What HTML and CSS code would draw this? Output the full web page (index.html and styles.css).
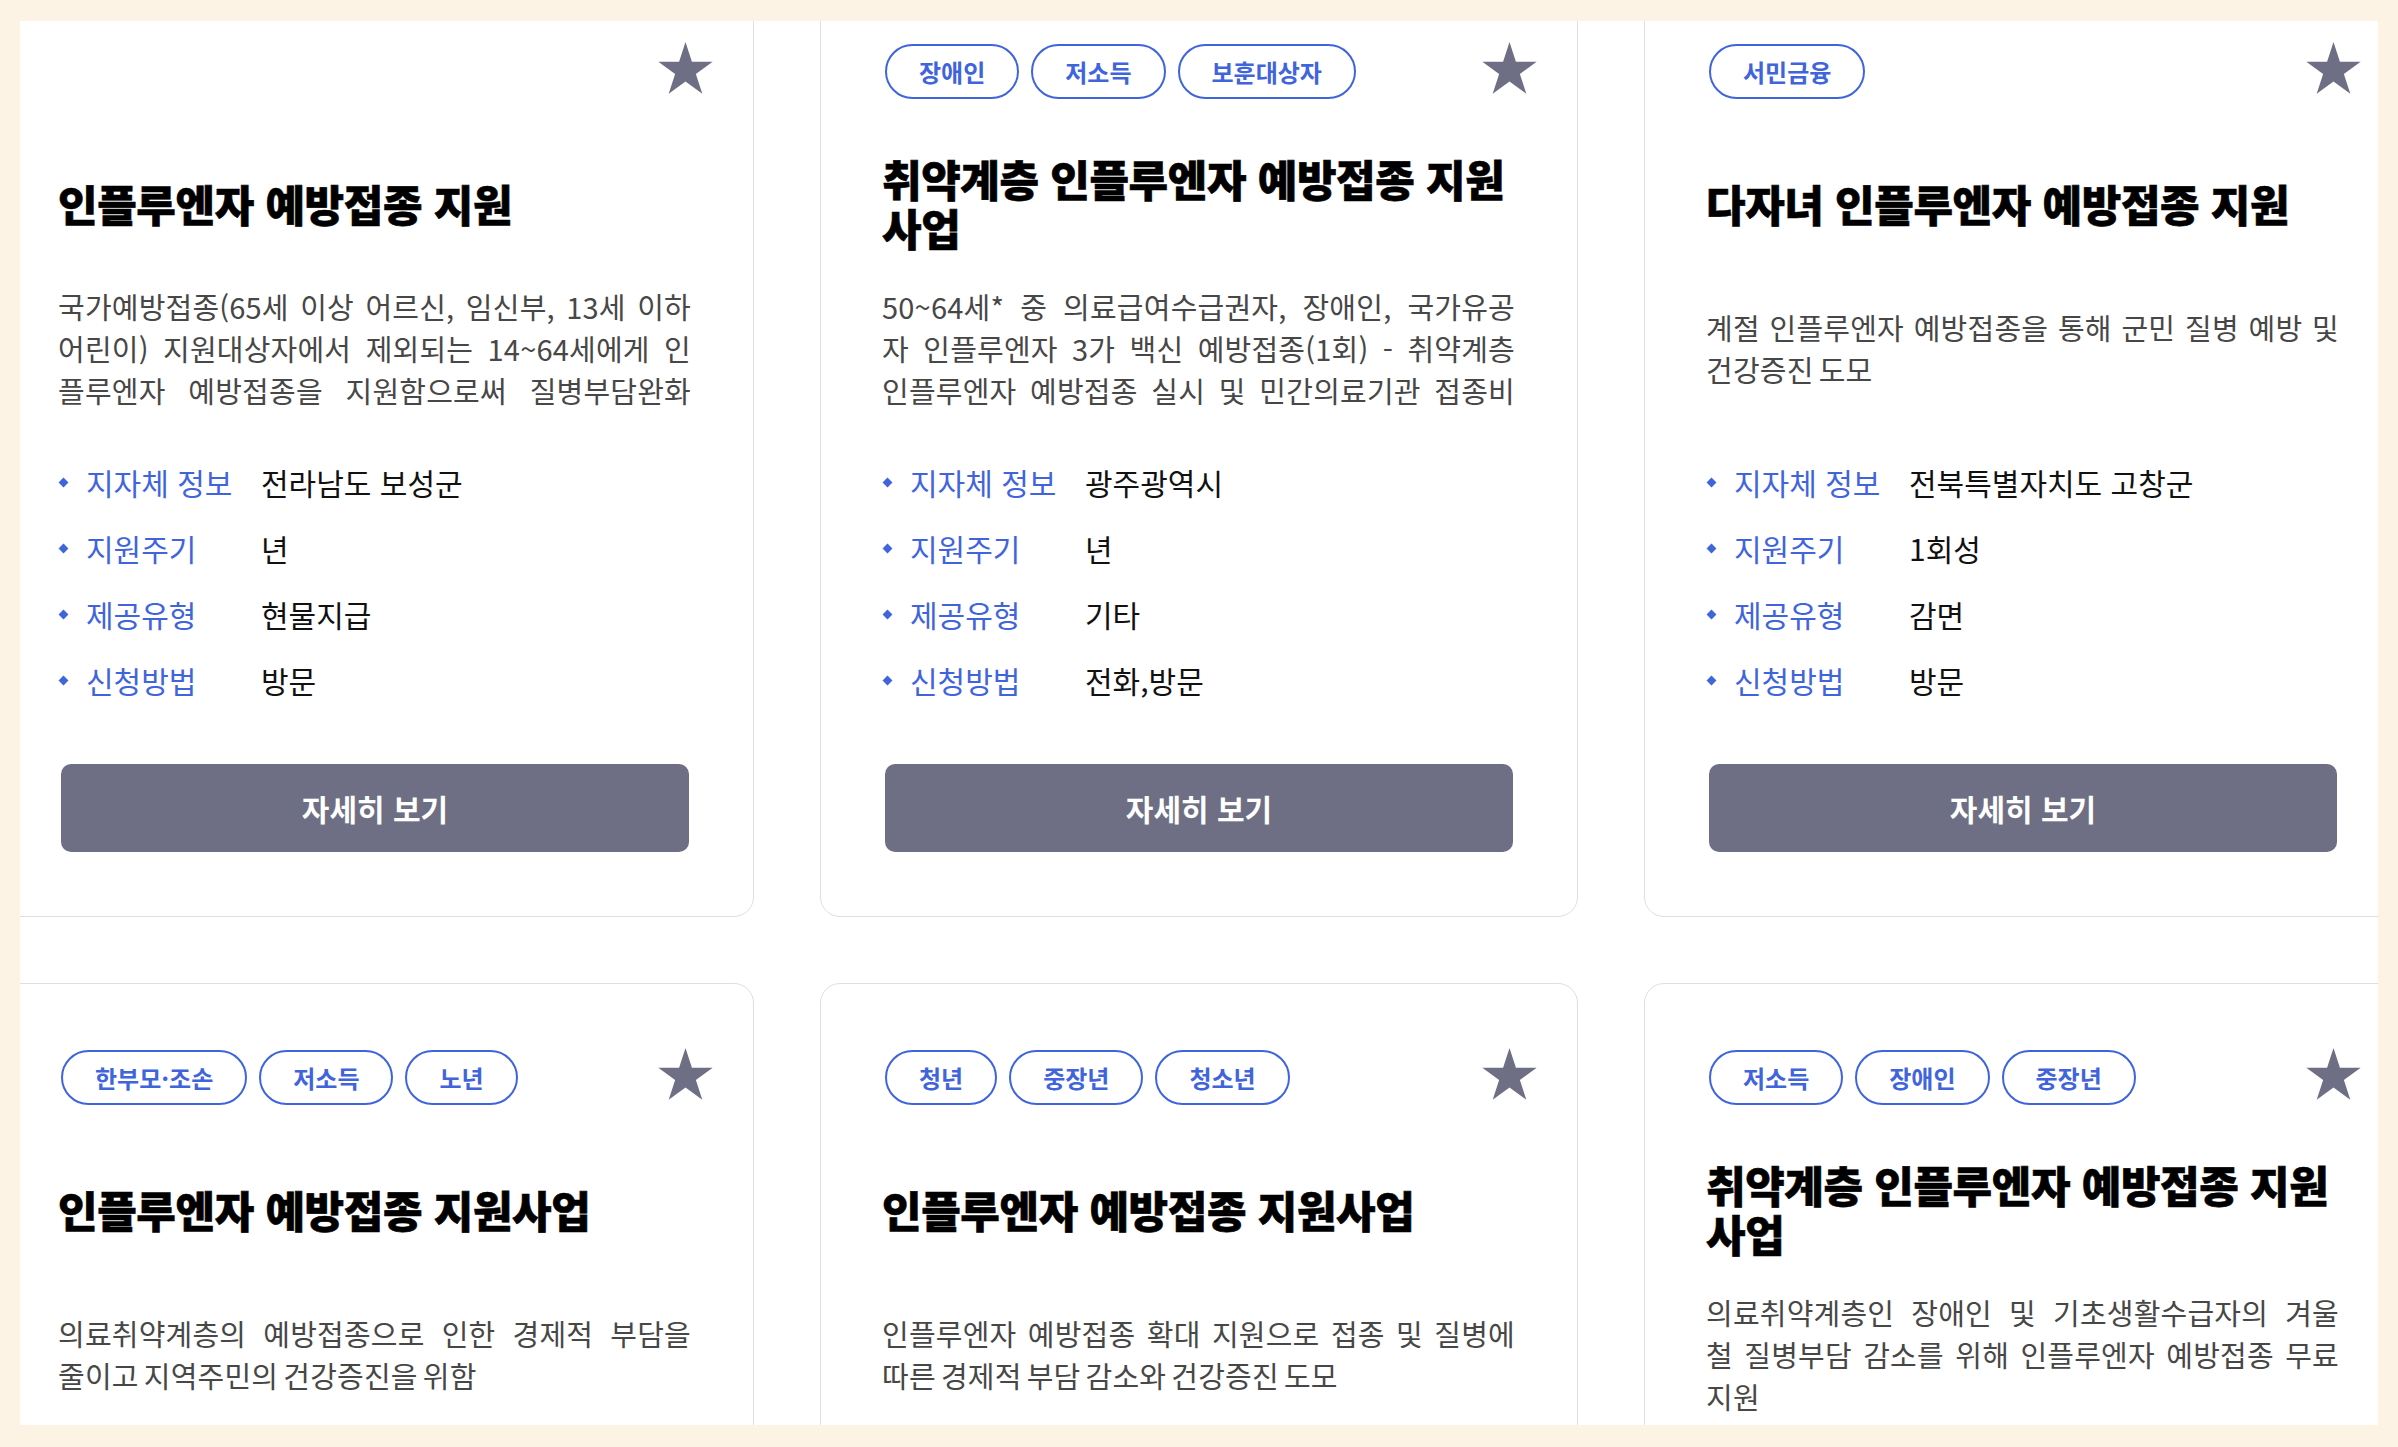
FILE: index.html
```html
<!DOCTYPE html>
<html lang="ko">
<head>
<meta charset="utf-8">
<title>지원사업 목록</title>
<link rel="stylesheet" href="styles.css">
</head>
<body>
<div class="frame">
  <div class="viewport">
    <div class="grid">

      <article class="card">
        <div class="card-top">
          <div class="tags"></div>
          <svg class="fav" viewBox="2 0 96 91" aria-label="즐겨찾기"><polygon points="50,0 61.23,34.55 97.55,34.55 68.17,55.9 79.39,90.45 50,69.1 20.61,90.45 31.83,55.9 2.45,34.55 38.77,34.55"/></svg>
        </div>
        <h2 class="title">인플루엔자 예방접종 지원</h2>
        <p class="desc">
          <span class="ln">국가예방접종(65세 이상 어르신, 임신부, 13세 이하</span>
          <span class="ln">어린이) 지원대상자에서 제외되는 14~64세에게 인</span>
          <span class="ln">플루엔자 예방접종을 지원함으로써 질병부담완화</span>
        </p>
        <ul class="info">
          <li><span class="label">지자체 정보</span><span class="value">전라남도 보성군</span></li>
          <li><span class="label">지원주기</span><span class="value">년</span></li>
          <li><span class="label">제공유형</span><span class="value">현물지급</span></li>
          <li><span class="label">신청방법</span><span class="value">방문</span></li>
        </ul>
        <button class="btn" type="button">자세히 보기</button>
      </article>

      <article class="card">
        <div class="card-top">
          <div class="tags"><span class="tag">장애인</span><span class="tag">저소득</span><span class="tag">보훈대상자</span></div>
          <svg class="fav" viewBox="2 0 96 91" aria-label="즐겨찾기"><polygon points="50,0 61.23,34.55 97.55,34.55 68.17,55.9 79.39,90.45 50,69.1 20.61,90.45 31.83,55.9 2.45,34.55 38.77,34.55"/></svg>
        </div>
        <h2 class="title">취약계층 인플루엔자 예방접종 지원사업</h2>
        <p class="desc">
          <span class="ln">50~64세* 중 의료급여수급권자, 장애인, 국가유공</span>
          <span class="ln">자 인플루엔자 3가 백신 예방접종(1회) - 취약계층</span>
          <span class="ln">인플루엔자 예방접종 실시 및 민간의료기관 접종비</span>
        </p>
        <ul class="info">
          <li><span class="label">지자체 정보</span><span class="value">광주광역시</span></li>
          <li><span class="label">지원주기</span><span class="value">년</span></li>
          <li><span class="label">제공유형</span><span class="value">기타</span></li>
          <li><span class="label">신청방법</span><span class="value">전화,방문</span></li>
        </ul>
        <button class="btn" type="button">자세히 보기</button>
      </article>

      <article class="card">
        <div class="card-top">
          <div class="tags"><span class="tag">서민금융</span></div>
          <svg class="fav" viewBox="2 0 96 91" aria-label="즐겨찾기"><polygon points="50,0 61.23,34.55 97.55,34.55 68.17,55.9 79.39,90.45 50,69.1 20.61,90.45 31.83,55.9 2.45,34.55 38.77,34.55"/></svg>
        </div>
        <h2 class="title">다자녀 인플루엔자 예방접종 지원</h2>
        <p class="desc">
          <span class="ln">계절 인플루엔자 예방접종을 통해 군민 질병 예방 및</span>
          <span class="ln ln-end">건강증진 도모</span>
        </p>
        <ul class="info">
          <li><span class="label">지자체 정보</span><span class="value">전북특별자치도 고창군</span></li>
          <li><span class="label">지원주기</span><span class="value">1회성</span></li>
          <li><span class="label">제공유형</span><span class="value">감면</span></li>
          <li><span class="label">신청방법</span><span class="value">방문</span></li>
        </ul>
        <button class="btn" type="button">자세히 보기</button>
      </article>

      <article class="card">
        <div class="card-top">
          <div class="tags"><span class="tag">한부모·조손</span><span class="tag">저소득</span><span class="tag">노년</span></div>
          <svg class="fav" viewBox="2 0 96 91" aria-label="즐겨찾기"><polygon points="50,0 61.23,34.55 97.55,34.55 68.17,55.9 79.39,90.45 50,69.1 20.61,90.45 31.83,55.9 2.45,34.55 38.77,34.55"/></svg>
        </div>
        <h2 class="title">인플루엔자 예방접종 지원사업</h2>
        <p class="desc">
          <span class="ln">의료취약계층의 예방접종으로 인한 경제적 부담을</span>
          <span class="ln ln-end">줄이고 지역주민의 건강증진을 위함</span>
        </p>
      </article>

      <article class="card">
        <div class="card-top">
          <div class="tags"><span class="tag">청년</span><span class="tag">중장년</span><span class="tag">청소년</span></div>
          <svg class="fav" viewBox="2 0 96 91" aria-label="즐겨찾기"><polygon points="50,0 61.23,34.55 97.55,34.55 68.17,55.9 79.39,90.45 50,69.1 20.61,90.45 31.83,55.9 2.45,34.55 38.77,34.55"/></svg>
        </div>
        <h2 class="title">인플루엔자 예방접종 지원사업</h2>
        <p class="desc">
          <span class="ln">인플루엔자 예방접종 확대 지원으로 접종 및 질병에</span>
          <span class="ln ln-end">따른 경제적 부담 감소와 건강증진 도모</span>
        </p>
      </article>

      <article class="card">
        <div class="card-top">
          <div class="tags"><span class="tag">저소득</span><span class="tag">장애인</span><span class="tag">중장년</span></div>
          <svg class="fav" viewBox="2 0 96 91" aria-label="즐겨찾기"><polygon points="50,0 61.23,34.55 97.55,34.55 68.17,55.9 79.39,90.45 50,69.1 20.61,90.45 31.83,55.9 2.45,34.55 38.77,34.55"/></svg>
        </div>
        <h2 class="title">취약계층 인플루엔자 예방접종 지원사업</h2>
        <p class="desc">
          <span class="ln">의료취약계층인 장애인 및 기초생활수급자의 겨울</span>
          <span class="ln">철 질병부담 감소를 위해 인플루엔자 예방접종 무료</span>
          <span class="ln ln-end">지원</span>
        </p>
      </article>

    </div>
  </div>
</div>
</body>
</html>
```

FILE: styles.css
```css
* {
  box-sizing: border-box;
}

html,
body {
  margin: 0;
  height: 100%;
}

body {
  background: #fdf3e4;
  font-family: "Noto Sans CJK KR", "Noto Sans", sans-serif;
}

.frame {
  height: 100vh;
  padding: 21px 20px 22px;
}

.viewport {
  height: 100%;
  overflow: hidden;
  background: #ffffff;
  display: flex;
  justify-content: center;
  align-items: flex-start;
}

.grid {
  flex: none;
  display: grid;
  grid-template-columns: repeat(3, 758px);
  gap: 66px;
  margin-top: -44px;
}

.card {
  height: 940px;
  border: 1px solid #dfdfdf;
  border-radius: 20px;
  padding: 66px 62px 64px 61px;
  display: flex;
  flex-direction: column;
  background: #ffffff;
}

.card-top {
  height: 55px;
  flex: none;
  display: flex;
  justify-content: space-between;
  align-items: flex-start;
}

.tags {
  display: flex;
  gap: 12px;
  margin-left: 3px;
}

.tag {
  height: 55px;
  padding: 0 32px;
  border: 2px solid #3f64dc;
  border-radius: 28px;
  color: #3f64dc;
  font-size: 24px;
  font-weight: 700;
  display: flex;
  align-items: center;
  white-space: nowrap;
}

.fav {
  flex: none;
  width: 55px;
  height: 52px;
  margin: -2px -22px 0 0;
  fill: #6e6f84;
}

.title {
  flex: none;
  margin: 55px 0 0;
  height: 98px;
  display: flex;
  align-items: center;
  font-size: 43px;
  font-weight: 900;
  line-height: 49px;
  letter-spacing: -0.4px;
  color: #000000;
  -webkit-text-stroke: 0.6px #000000;
}

.desc {
  flex: none;
  margin: 33px 0 0;
  height: 126px;
  display: flex;
  flex-direction: column;
  justify-content: center;
  font-size: 29px;
  line-height: 42px;
  letter-spacing: 0.2px;
  word-spacing: -3.2px;
  color: #474747;
}

.ln {
  display: block;
  text-align: justify;
  text-align-last: justify;
  text-justify: inter-word;
}

.ln-end {
  text-align-last: left;
}

.info {
  flex: none;
  list-style: none;
  margin: 38px 0 0;
  padding: 0;
}

.info li {
  height: 66px;
  display: grid;
  grid-template-columns: 28px 175px 1fr;
  align-items: center;
  font-size: 30px;
}

.info li::before {
  content: "";
  width: 7px;
  height: 7px;
  margin-left: 2px;
  background: #3f64dc;
  transform: rotate(45deg);
}

.label {
  color: #3f64dc;
}

.value {
  color: #111111;
}

.btn {
  flex: none;
  margin: 51px 2px 0 3px;
  height: 88px;
  border: 0;
  border-radius: 10px;
  background: #6e6f84;
  color: #ffffff;
  font-family: "Noto Sans CJK KR", "Noto Sans", sans-serif;
  font-size: 30px;
  font-weight: 700;
}
```
